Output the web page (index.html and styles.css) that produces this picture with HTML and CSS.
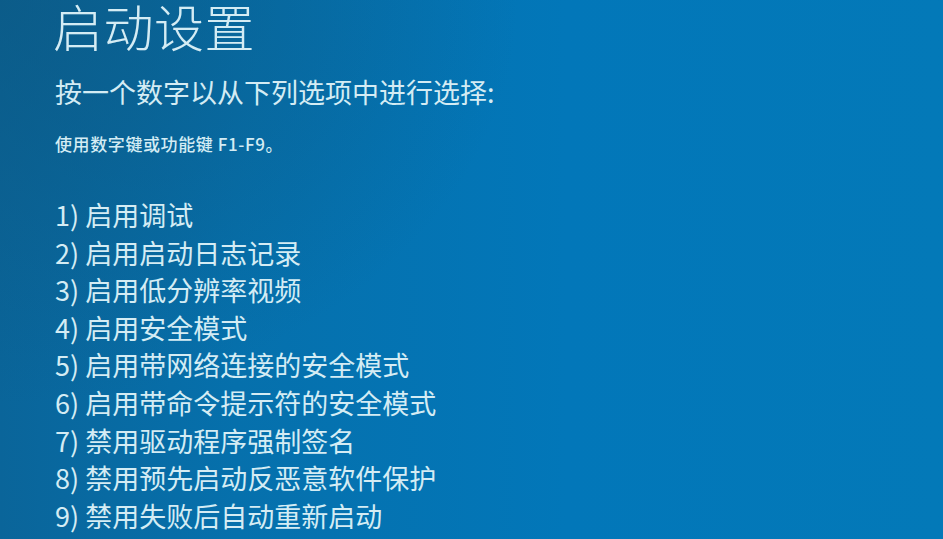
FILE: index.html
```html
<!DOCTYPE html>
<html lang="zh-CN">
<head>
<meta charset="utf-8">
<title>启动设置</title>
<link rel="stylesheet" href="styles.css">
</head>
<body>
<main class="screen">
  <h1 class="title">启动设置</h1>
  <p class="prompt">按一个数字以从下列选项中进行选择:</p>
  <p class="hint">使用数字键或功能键 F1-F9。</p>
  <ol class="options">
    <li>1) 启用调试</li>
    <li>2) 启用启动日志记录</li>
    <li>3) 启用低分辨率视频</li>
    <li>4) 启用安全模式</li>
    <li>5) 启用带网络连接的安全模式</li>
    <li>6) 启用带命令提示符的安全模式</li>
    <li>7) 禁用驱动程序强制签名</li>
    <li>8) 禁用预先启动反恶意软件保护</li>
    <li>9) 禁用失败后自动重新启动</li>
  </ol>
</main>
</body>
</html>
```
FILE: styles.css
```css
html, body {
  margin: 0;
  padding: 0;
  height: 100%;
  overflow: hidden;
}
body {
  background: #0476b5;
  font-family: "Noto Sans CJK SC", "Noto Sans", sans-serif;
  color: #d4ecf4;
}
.screen {
  height: 539px;
  box-sizing: border-box;
  padding: 0 0 0 53px;
  background:
    radial-gradient(ellipse 55% 75% at 0% 0%, rgba(12, 88, 130, 0.7), rgba(12, 88, 130, 0) 100%),
    linear-gradient(90deg, #0a659a 0%, #0670ac 25%, #0277b9 60%, #0379b8 100%);
}
.title {
  margin: 0;
  font-size: 50px;
  font-weight: 300;
  line-height: 50px;
  letter-spacing: 0.5px;
}
.prompt {
  margin: 24px 0 0 2px;
  font-size: 27px;
  font-weight: 400;
  line-height: 36px;
}
.hint {
  margin: 24px 0 0 2px;
  font-size: 17px;
  font-weight: 500;
  line-height: 20px;
  letter-spacing: 0.6px;
}
.options {
  list-style: none;
  margin: 42px 0 0 2px;
  padding: 0;
  font-size: 27px;
  line-height: 37.6px;
}
.options li {
  margin: 0;
}
```
